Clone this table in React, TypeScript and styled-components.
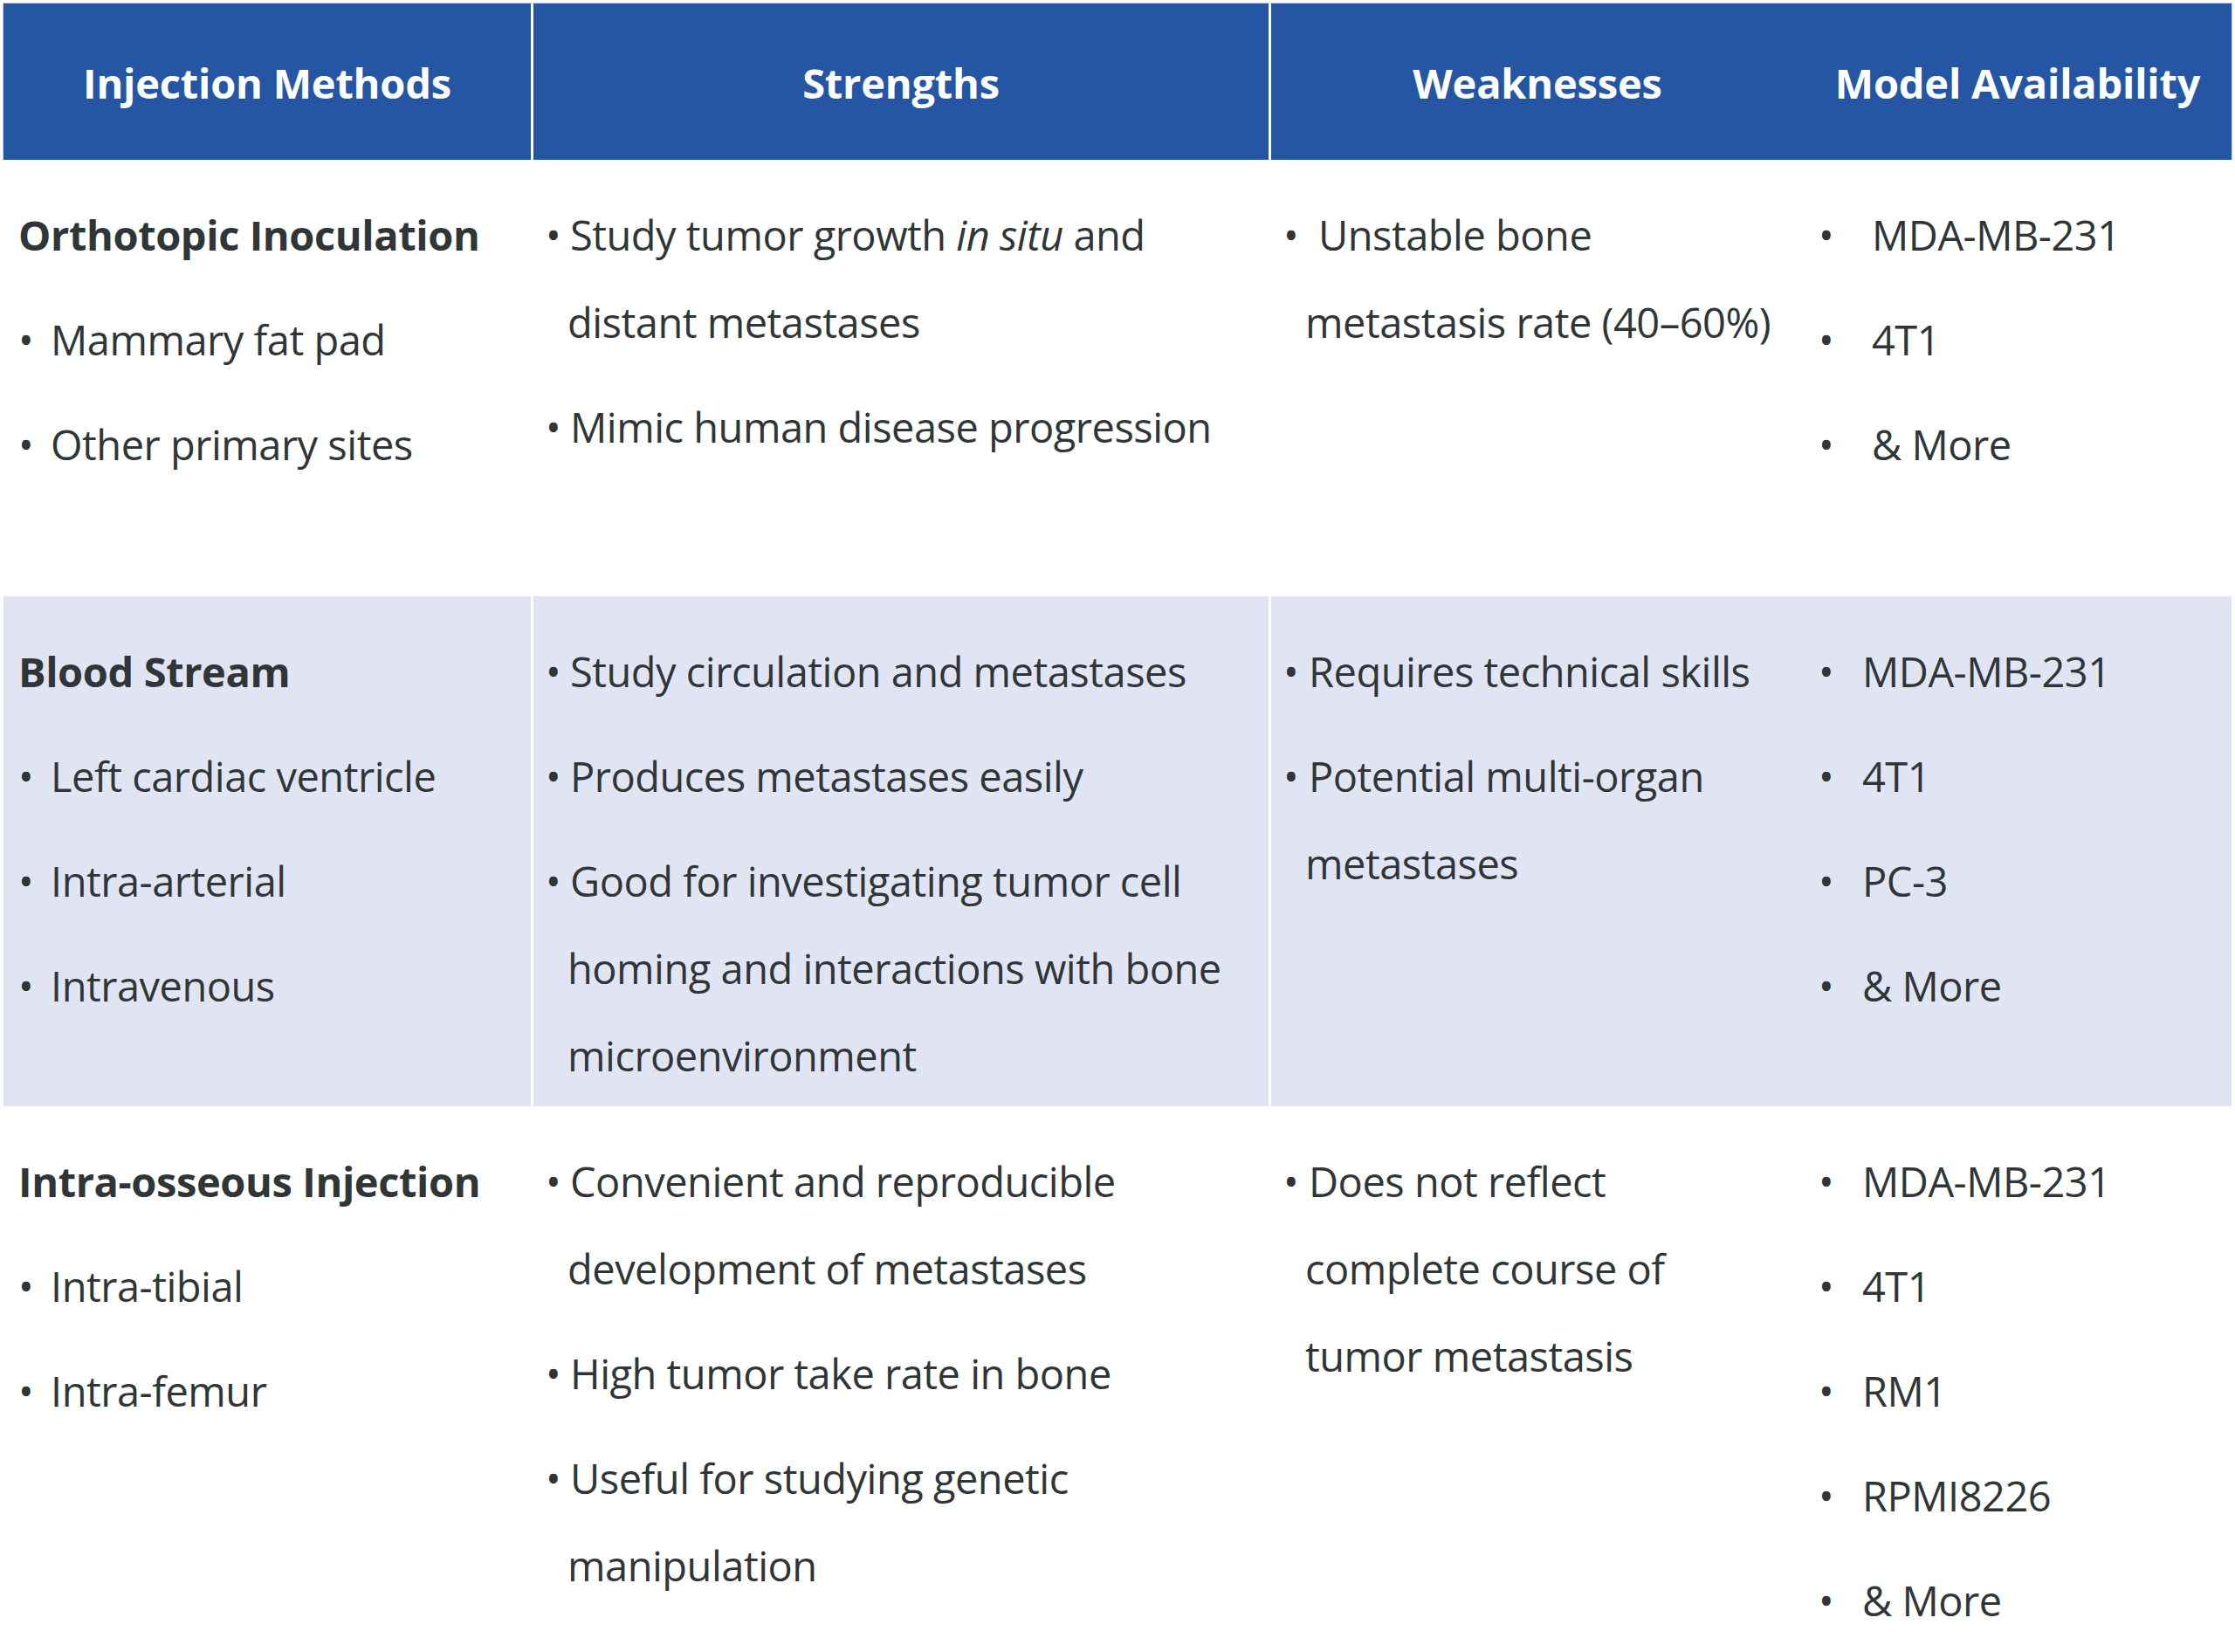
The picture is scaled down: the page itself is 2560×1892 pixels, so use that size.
import { FC, Fragment, ReactNode } from 'react';
import styled, { createGlobalStyle } from 'styled-components';

const COLS = '604px 845px 613px 490px';

const GlobalStyle = createGlobalStyle`
  html, body {
    margin: 0;
    padding: 0;
    background: #fff;
  }

  body {
    font-family: 'Open Sans', 'Noto Sans', sans-serif;
    color: #303638;
  }
`;

const Table = styled.div`
  width: 2552px;
  margin: 4px 0 0 4px;
  font-size: 47px;
`;

const Head = styled.div`
  display: grid;
  grid-template-columns: ${COLS};
  height: 179px;
  background: #2556a4;
  box-shadow: 0 0 0 1px #c6d1e8;
`;

const HeadCell = styled.div<{ $divider?: boolean }>`
  box-sizing: border-box;
  display: flex;
  align-items: center;
  justify-content: center;
  padding-top: 3px;
  color: #fff;
  font-weight: 700;
  letter-spacing: -0.2px;
  white-space: nowrap;
  border-left: ${({ $divider }) => ($divider ? '3px solid #fff' : 'none')};
`;

const Row = styled.div<{ $shaded?: boolean; $height?: number }>`
  display: grid;
  grid-template-columns: ${COLS};
  min-height: ${({ $height }) => ($height ? `${$height}px` : 'auto')};
  background: ${({ $shaded }) => ($shaded ? '#e1e5f3' : '#fff')};
`;

const Cell = styled.div<{ $divider?: boolean }>`
  box-sizing: border-box;
  padding: 36px 0 8px ${({ $divider }) => ($divider ? 14 : 17)}px;
  border-left: ${({ $divider }) => ($divider ? '3px solid #fff' : 'none')};
  line-height: 100px;
  letter-spacing: -0.5px;
`;

const Title = styled.div`
  margin-left: 0;
  font-weight: 700;
  letter-spacing: -0.4px;
  white-space: nowrap;
`;

const Item = styled.div`
  display: flex;
  margin-top: 20px;

  &:first-child {
    margin-top: 0;
  }
`;

const Bullet = styled.span<{ $width: number }>`
  flex: 0 0 ${({ $width }) => $width}px;
`;

const Text = styled.span<{ $indent: number }>`
  display: block;
  text-indent: ${({ $indent }) => $indent}px;
  white-space: nowrap;
`;

type Entry = ReactNode[];

type RowData = {
  title: string;
  methods: string[];
  strengths: Entry[];
  weaknesses: Entry[];
  models: string[];
  shaded?: boolean;
  height?: number;
  weakIndent: number;
  modelGap: number;
};

const rows: RowData[] = [
  {
    title: 'Orthotopic Inoculation',
    methods: ['Mammary fat pad', 'Other primary sites'],
    strengths: [
      [
        <>
          Study tumor growth <i>in situ</i> and
        </>,
        'distant metastases',
      ],
      ['Mimic human disease progression'],
    ],
    weaknesses: [['Unstable bone', 'metastasis rate (40–60%)']],
    models: ['MDA-MB-231', '4T1', '& More'],
    height: 500,
    weakIndent: 15,
    modelGap: 61,
  },
  {
    title: 'Blood Stream',
    methods: ['Left cardiac ventricle', 'Intra-arterial', 'Intravenous'],
    strengths: [
      ['Study circulation and metastases'],
      ['Produces metastases easily'],
      ['Good for investigating tumor cell', 'homing and interactions with bone', 'microenvironment'],
    ],
    weaknesses: [['Requires technical skills'], ['Potential multi-organ', 'metastases']],
    models: ['MDA-MB-231', '4T1', 'PC-3', '& More'],
    shaded: true,
    height: 584,
    weakIndent: 4,
    modelGap: 50,
  },
  {
    title: 'Intra-osseous Injection',
    methods: ['Intra-tibial', 'Intra-femur'],
    strengths: [
      ['Convenient and reproducible', 'development of metastases'],
      ['High tumor take rate in bone'],
      ['Useful for studying genetic', 'manipulation'],
    ],
    weaknesses: [['Does not reflect', 'complete course of', 'tumor metastasis']],
    models: ['MDA-MB-231', '4T1', 'RM1', 'RPMI8226', '& More'],
    weakIndent: 4,
    modelGap: 50,
  },
];

const BulletItem: FC<{ lines: Entry; gap: number; indent: number }> = ({ lines, gap, indent }) => (
  <Item>
    <Bullet $width={gap}>•</Bullet>
    <Text $indent={indent}>
      {lines.map((line, i) => (
        <Fragment key={i}>
          {i > 0 && <br />}
          {line}
        </Fragment>
      ))}
    </Text>
  </Item>
);

const App: FC = () => (
  <>
    <GlobalStyle />
    <Table>
      <Head>
        <HeadCell>Injection Methods</HeadCell>
        <HeadCell $divider>Strengths</HeadCell>
        <HeadCell $divider>Weaknesses</HeadCell>
        <HeadCell>Model Availability</HeadCell>
      </Head>
      {rows.map((row) => (
        <Row key={row.title} $shaded={row.shaded} $height={row.height}>
          <Cell>
            <Title>{row.title}</Title>
            {row.methods.map((m) => (
              <BulletItem key={m} lines={[m]} gap={37} indent={0} />
            ))}
          </Cell>
          <Cell $divider>
            {row.strengths.map((s, i) => (
              <BulletItem key={i} lines={s} gap={25} indent={3} />
            ))}
          </Cell>
          <Cell $divider>
            {row.weaknesses.map((w, i) => (
              <BulletItem key={i} lines={w} gap={25} indent={row.weakIndent} />
            ))}
          </Cell>
          <Cell>
            {row.models.map((m) => (
              <BulletItem key={m} lines={[m]} gap={row.modelGap} indent={0} />
            ))}
          </Cell>
        </Row>
      ))}
    </Table>
  </>
);

export default App;
